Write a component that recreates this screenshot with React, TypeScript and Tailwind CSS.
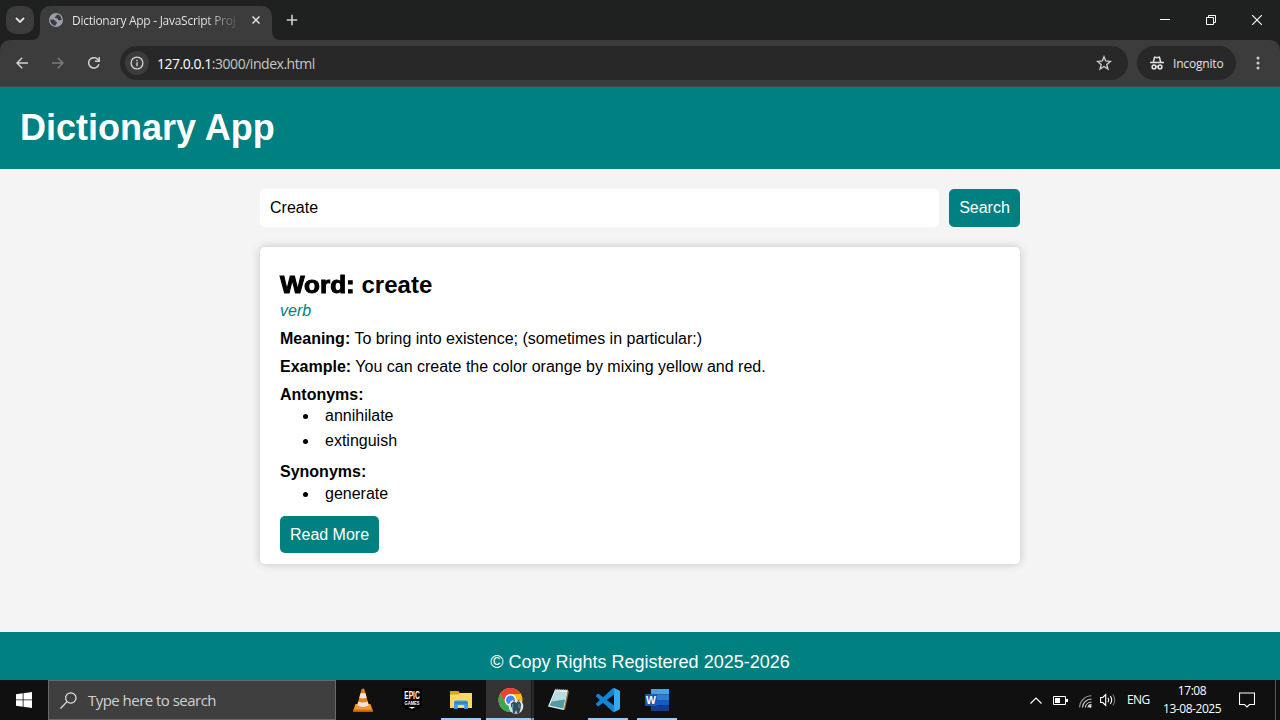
import type { ReactNode } from "react";

function ChevronDown() {
  return (
    <svg width="10" height="8" viewBox="0 0 10 8" fill="none" stroke="#e3e3e3" strokeWidth="1.8">
      <path d="M1 2l4 4 4-4" />
    </svg>
  );
}

function Globe() {
  return (
    <svg width="16" height="16" viewBox="0 0 16 16" className="shrink-0">
      <circle cx="8" cy="8" r="7" fill="#9aa0ab" />
      <path
        d="M2.300 7.500C3.800 7.500 5.500 7.400 6.800 8.200c1 .6.700 1.600 1.800 1.700.6.100.4 1 .1 1.500-.4.700-1.300.9-1.300 2.300C4.300 13.500 2.200 10.800 2.300 7.500zM9.500 2.500c-.2.900-1.700.8-1.700 1.800-.1.900-1.300.5-1.200 1.300.1.900 1.700.6 2.600 1 .9.300.6 1.500 1.700 1.700.9.100 1.800-.4 2.800-.3C13.400 4.800 11.900 3 9.500 2.500z"
        fill="#3c3c3c"
      />
    </svg>
  );
}

function TabStrip() {
  return (
    <div className="flex h-10 shrink-0 bg-[#1f2120]">
      <div className="ml-1.5 mt-1.5 flex h-7 w-7 items-center justify-center rounded-[10px] bg-[#3c3c3c]">
        <ChevronDown />
      </div>
      <svg width="8" height="8" className="-ml-0.5 self-end" viewBox="0 0 8 8">
        <path d="M8 0v8H0a8 8 0 0 0 8-8z" fill="#3c3c3c" />
      </svg>
      <div className="mt-1.5 flex w-[232px] items-center rounded-t-[10px] bg-[#3c3c3c] pb-1.5 pl-2">
        <Globe />
        <div className="ml-2 w-[167px] whitespace-nowrap bg-gradient-to-r from-[#ececec] from-80% to-[#4a4a4a] bg-clip-text pt-0.5 text-[12px] leading-4 tracking-[-0.28px] text-transparent">
          Dictionary App - JavaScript Proj
        </div>
        <svg width="8" height="8" viewBox="0 0 8 8" className="ml-[13px]" stroke="#e3e3e3" strokeWidth="1.5">
          <path d="M.5.5l7 7M7.500.5l-7 7" />
        </svg>
      </div>
      <svg width="8" height="8" className="self-end" viewBox="0 0 8 8">
        <path d="M0 0v8h8a8 8 0 0 1-8-8z" fill="#3c3c3c" />
      </svg>
      <svg width="12" height="12" viewBox="0 0 12 12" className="ml-1.5 mt-3.5" stroke="#d0d0d0" strokeWidth="1.6">
        <path d="M6 .8v10.400M.8 6h10.400" />
      </svg>
      <div className="ml-auto flex text-white">
        <div className="flex w-[46px] items-center justify-center">
          <svg width="10" height="10" viewBox="0 0 10 10">
            <path d="M0 4h10v1H0z" fill="#fff" />
          </svg>
        </div>
        <div className="flex w-[46px] items-center justify-center">
          <svg width="10" height="10" viewBox="0 0 10 10" fill="none" stroke="#fff">
            <path d="M.5 2.500h7v7h-7zM2.500 2.500v-2h7v7h-2" />
          </svg>
        </div>
        <div className="flex w-[46px] items-center justify-center">
          <svg width="10" height="10" viewBox="0 0 10 10" stroke="#fff" strokeWidth="1.100">
            <path d="M0 0l10 10M10 0L0 10" />
          </svg>
        </div>
      </div>
    </div>
  );
}

function AddressBar() {
  return (
    <div className="bg-[#1f2120]">
      <div className="flex h-[47px] items-center rounded-t-[10px] border-b border-[#474747] bg-[#3c3c3c]">
        <svg width="12" height="12" viewBox="0 0 12 12" className="ml-4" fill="none" stroke="#d0d0d0" strokeWidth="1.5">
          <path d="M12 6H1.200M6.200.8L1 6l5.200 5.200" />
        </svg>
        <svg width="12" height="12" viewBox="0 0 12 12" className="ml-6" fill="none" stroke="#7b7b7b" strokeWidth="1.5">
          <path d="M0 6h10.800M5.800.8L11 6l-5.200 5.200" />
        </svg>
        <svg width="12" height="12" viewBox="0 0 12 12" className="ml-6" fill="none" stroke="#d0d0d0" strokeWidth="1.5">
          <path d="M10.900 7.200A5.200 5.200 0 1 1 9.800 2.400L11 3.700" />
          <path d="M11.200 0v4.300H6.900" />
        </svg>
        <div className="ml-5 flex h-[34px] w-[1008px] items-center rounded-full bg-[#282828] px-[5px]">
          <div className="flex h-6 w-6 items-center justify-center rounded-full bg-[#3c3c3c]">
            <svg width="14" height="14" viewBox="0 0 14 14" fill="none" stroke="#d6d6d6" strokeWidth="1.300">
              <circle cx="7" cy="7" r="5.900" />
              <path d="M7 6.200v4M7 3.700v1.500" />
            </svg>
          </div>
          <div className="ml-2 mt-px text-[14px] leading-5 tracking-[-0.47px] text-[#c7c7c7]">
            <span className="text-white">127.0.0.1</span>:3000/index.html
          </div>
          <svg width="16" height="16" viewBox="0 0 16 16" className="ml-auto mr-[11px]" fill="none" stroke="#d0d0d0" strokeWidth="1.300">
            <path d="M8 1.700l1.700 4.300 4.700.4-3.600 3 1.200 4.600L8 11.500 4 14l1.200-4.600-3.600-3 4.700-.4z" />
          </svg>
        </div>
        <div className="ml-[9px] flex h-[34px] w-[99px] items-center rounded-full bg-[#282828] pl-[13px] text-[12px] leading-4 tracking-[-0.18px] text-[#e3e3e3]">
          <svg width="14" height="14" viewBox="0 0 14 14" fill="none" stroke="#e3e3e3" strokeWidth="1.500">
            <path d="M0 6.500h14" />
            <path d="M3.300 6.300l1.300-5.200 2.400.6 2.400-.6 1.300 5.200" />
            <circle cx="4" cy="10.900" r="1.900" />
            <circle cx="10" cy="10.900" r="1.900" />
            <path d="M5.900 10.700q1.100-.6 2.200 0" />
          </svg>
          <span className="ml-[9px] mt-px">Incognito</span>
        </div>
        <svg width="4" height="14" viewBox="0 0 4 14" className="ml-5" fill="#d0d0d0">
          <circle cx="2" cy="2" r="1.500" />
          <circle cx="2" cy="7" r="1.500" />
          <circle cx="2" cy="12" r="1.500" />
        </svg>
      </div>
    </div>
  );
}

function WordList({ title, words }: { title: string; words: string[] }) {
  return (
    <>
      <b className="block leading-[18px]">{title}</b>
      <ul>
        {words.map((w) => (
          <li key={w} className="flex h-[25px] items-center">
            <span className="ml-[23px] mr-[17px] mt-0.5 h-[5px] w-[5px] rounded-full bg-black" />
            <span className="leading-[18px]">{w}</span>
          </li>
        ))}
      </ul>
    </>
  );
}

function DictionaryPage() {
  return (
    <div className="flex h-[593px] flex-col bg-[#f4f4f4] font-['Liberation_Sans',Arial,sans-serif] text-[16px] text-black">
      <header className="flex h-[82px] shrink-0 items-center bg-[#008080] pl-5">
        <h1 className="text-[36px] font-bold leading-[42px] text-white">Dictionary App</h1>
      </header>
      <main className="mx-auto w-[760px] grow pt-5">
        <div className="flex h-[38px] gap-2.5">
          <div className="flex grow items-center rounded-[5px] bg-white px-2.5">Create</div>
          <button className="w-[71px] rounded-[5px] bg-[#008080] text-white">Search</button>
        </div>
        <section className="mt-5 h-[317px] rounded-[5px] bg-white px-5 pt-6 shadow-[0_0_10px_rgba(0,0,0,0.2)]">
          <h2 className="flex text-[24px] font-bold leading-7">
            <span className="w-[81.500px]">
              <span className="inline-block origin-left scale-x-[1.085] [-webkit-text-stroke:1px_black]">Word:</span>
            </span>
            <span>create</span>
          </h2>
          <p className="mt-[3px] italic leading-[18px] text-[#008080]">verb</p>
          <p className="mt-2.5 leading-[18px]">
            <b>Meaning:</b> To bring into existence; (sometimes in particular:)
          </p>
          <p className="mb-2.5 mt-2.5 leading-[18px]">
            <b>Example:</b> You can create the color orange by mixing yellow and red.
          </p>
          <div className="[&>ul]:-mt-px">
            <WordList title="Antonyms:" words={["annihilate", "extinguish"]} />
          </div>
          <div className="mt-2.5">
            <WordList title="Synonyms:" words={["generate"]} />
          </div>
          <button className="mt-2.5 block h-[37px] w-[99px] rounded-[5px] bg-[#008080] text-white">Read More</button>
        </section>
      </main>
      <footer className="h-12 shrink-0 bg-[#008080] pt-5 text-center text-[18px] leading-5 text-white">
        © Copy Rights Registered 2025-2026
      </footer>
    </div>
  );
}

function Vlc() {
  return (
    <svg width="22" height="24" viewBox="0 0 22 24">
      <path d="M3.500 16h15l2.500 7.500H1z" fill="#fb9a1c" />
      <path d="M1.400 21.500h19.200l.4 2H1z" fill="#d96a00" />
      <path d="M9.700 1q1.300-.8 2.600 0L17 18q-6 3-12 0z" fill="#f07d0c" />
      <path d="M8.500 5.300h5l1.200 4.500q-3.700 1.500-7.400 0zM6.300 13.400q4.700 2 9.400 0l1.100 4q-5.800 3-11.600 0z" fill="#e6e6e6" />
    </svg>
  );
}

function Epic() {
  return (
    <svg width="20" height="23" viewBox="0 0 20 23" className="-mt-0.5" overflow="visible">
      <path d="M1.500 0h17Q20 0 20 1.500V18q0 1-1 1.500L10 23l-9-3.500q-1-.5-1-1.500V1.500Q0 0 1.500 0z" fill="#000" />
      <text x="2.200" y="11" fill="#fff" fontFamily="Liberation Sans" fontWeight="700" fontSize="11.500" textLength="15.600" lengthAdjust="spacingAndGlyphs">EPIC</text>
      <text x="2.500" y="16.500" fill="#fff" fontFamily="Liberation Sans" fontWeight="700" fontSize="5" textLength="15" lengthAdjust="spacingAndGlyphs">GAMES</text>
      <path d="M6.500 19h7L10 20.800z" fill="#fff" />
    </svg>
  );
}

function Folder() {
  return (
    <svg width="22" height="20" viewBox="0 0 22 20">
      <path d="M0 1h8.500l1.500 2.500h12V18H0z" fill="#e3a01b" />
      <path d="M0 4.500h8.500L10 3h12v15H0z" fill="#ffd767" />
      <path d="M4 19V12q0-1.500 1.500-1.500h11Q18 10.500 18 12v7h-3.800v-4H7.800v4z" fill="#3e9ae3" />
      <path d="M5 12h12v1.500H5z" fill="#2580cc" />
    </svg>
  );
}

function Chrome() {
  return (
    <svg width="26" height="26" viewBox="0 0 26 26">
      <circle cx="12.500" cy="12" r="12" fill="#fbc116" />
      <path d="M2.100 6A12 12 0 0 1 22.900 6H12.500L7.300 15z" fill="#ea4335" />
      <path d="M2.100 6A12 12 0 0 0 12.500 24l5.200-9H7.300z" fill="#34a853" />
      <circle cx="12.500" cy="12" r="5.900" fill="#fff" />
      <circle cx="12.500" cy="12" r="4.500" fill="#4285f4" />
      <circle cx="18" cy="18.500" r="7.300" fill="#dce3e4" />
      <path d="M13 15.500l2-1.500h2l1.500 1 1-1.500h2l1.500 2.500-.5 5-1.500 4.300-2-.4-1-3-1 3h-2l-.5-4-1.500-2.500z" fill="#2c515e" />
      <path d="M15.300 11.700h1.700v2h-1.700zM19.800 11.500h1.700v2h-1.700z" fill="#8b7468" />
      <path d="M14 16h1.300v4.500H14zM20.500 16h1v4h-1z" fill="#5b94a5" />
    </svg>
  );
}

function Notepad() {
  return (
    <svg width="24" height="24" viewBox="0 0 24 24">
      <path d="M20 2.500l2 .5-4 19-3-1z" fill="#9a6b3b" />
      <path d="M8 1.500l12.700.5-4 20L1 18.500z" fill="#eef7f6" />
      <path d="M8.500 3.500l11 .7-3.300 16.300-13.700-3z" fill="#8ec4ca" />
      <path d="M8.500 3.500l11 .7-1.500 7.300L5 14z" fill="#b7dde0" />
      <path d="M5 13.500l13-2-1.800 9-13.700-3z" fill="#559aa2" />
      <path d="M8 1.500l12.700.5" stroke="#999" strokeWidth="1.500" strokeDasharray="1 1" />
    </svg>
  );
}

function VsCode() {
  return (
    <svg width="24" height="24" viewBox="0 0 24 24">
      <path
        d="M23.150 2.587L18.210.21a1.494 1.494 0 0 0-1.705.29l-9.460 8.630-4.120-3.128a.999.999 0 0 0-1.276.057L.327 7.261A1 1 0 0 0 .326 8.740L3.899 12 .326 15.260a1 1 0 0 0 .001 1.479L1.650 17.940a.999.999 0 0 0 1.276.057l4.120-3.128 9.460 8.630a1.492 1.492 0 0 0 1.704.290l4.942-2.377A1.500 1.500 0 0 0 24 20.060V3.939a1.500 1.500 0 0 0-.850-1.352zm-5.146 14.861L10.826 12l7.178-5.448v10.896z"
        fill="#1485d2"
      />
      <path d="M18 .1l5.150 2.487A1.500 1.500 0 0 1 24 3.939V20.060a1.500 1.500 0 0 1-.850 1.352L18 23.900z" fill="#33aaf3" />
    </svg>
  );
}

function Word() {
  return (
    <svg width="24" height="22" viewBox="0 0 24 22">
      <path d="M6 0h18v5.500H6z" fill="#41a5ee" />
      <path d="M6 5.500h18V11H6z" fill="#2b7cd3" />
      <path d="M6 11h18v5.500H6z" fill="#185abd" />
      <path d="M6 16.500h18V22H6z" fill="#103f91" />
      <rect y="5" width="12" height="12" rx="1" fill="#1b57b3" />
      <text x="1" y="14.600" fill="#fff" fontFamily="Liberation Sans" fontWeight="700" fontSize="10.500">W</text>
    </svg>
  );
}

function TaskItem({ children, open, active }: { children: ReactNode; open?: boolean; active?: boolean }) {
  return (
    <div className="flex w-[49px] justify-center">
      {active ? (
        <div className="flex w-12">
          <div className="flex w-[45px] justify-center border-b-2 border-[#9bcbf7] bg-[#333333] pl-1.5 pt-2">
            {children}
          </div>
          <div className="w-[3px] border-b-2 border-l border-b-[#7ba4c9] border-l-[#1b1b1b] bg-[#282828]" />
        </div>
      ) : (
        <div className={open ? "flex w-10 items-center justify-center border-b-2 border-[#9bcbf7] pt-0.5" : "flex w-10 items-center justify-center"}>
          {children}
        </div>
      )}
    </div>
  );
}

function Taskbar() {
  return (
    <div className="flex h-10 shrink-0 bg-[#101010] text-white">
      <div className="flex w-12 items-center justify-center">
        <svg width="16" height="16" viewBox="0 0 16 16" fill="#fff">
          <path d="M0 2.300L6.700 1.300v6.200H0zM7.500 1.200L16 0v7.500H7.500zM0 8.300h6.700v6.400L0 13.700zM7.500 8.300H16V16l-8.500-1.200z" />
        </svg>
      </div>
      <div className="flex w-[288px] items-center border border-[#696969] bg-[#3f3f3f] pl-[11px]">
        <svg width="17" height="17" viewBox="0 0 17 17" fill="none" stroke="#e6e6e6" strokeWidth="1.200">
          <circle cx="10.800" cy="6" r="5.200" />
          <path d="M7.100 9.700L.5 16.500" />
        </svg>
        <span className="ml-[11px] text-[15px] leading-5 tracking-[-0.53px] text-[#d2d2d2]">Type here to search</span>
      </div>
      <div className="ml-0.5 flex">
        <TaskItem><Vlc /></TaskItem>
        <TaskItem><Epic /></TaskItem>
        <TaskItem open><Folder /></TaskItem>
        <TaskItem open active><Chrome /></TaskItem>
        <TaskItem><Notepad /></TaskItem>
        <TaskItem open><VsCode /></TaskItem>
        <TaskItem open><Word /></TaskItem>
      </div>
      <div className="ml-auto flex items-center">
        <svg width="12" height="7" viewBox="0 0 12 7" fill="none" stroke="#fff" strokeWidth="1.200">
          <path d="M.5 6.500L6 1l5.500 5.500" />
        </svg>
        <svg width="15" height="9" viewBox="0 0 15 9" className="ml-[11px]" fill="none" stroke="#fff">
          <path d="M.5.5h12v8H.5z" />
          <path d="M2 2h5v5H2zM13 3h2v3h-2z" fill="#fff" stroke="none" />
        </svg>
        <svg width="13" height="13" viewBox="0 0 13 13" className="ml-[11px] mt-0.5" fill="none" stroke="#ddd" strokeWidth="1.100">
          <path d="M.6 12.500A12 12 0 0 1 12.500.8" stroke="#999" />
          <path d="M3.500 12.500a9 9 0 0 1 9-8.500M6.300 12.500a6.300 6.300 0 0 1 6.200-5.500" />
          <path d="M8.900 12.500a3.600 3.600 0 0 1 3.600-2.900" />
          <circle cx="11.300" cy="11.500" r="1.200" fill="#fff" stroke="none" />
        </svg>
        <svg width="17" height="14" viewBox="0 0 17 14" className="ml-2" fill="none" stroke="#fff" strokeWidth="1.100">
          <path d="M.6 4.500h2.200L5.700 1.500v11L2.800 9.500H.6z" />
          <path d="M8 4.700q1.600 2.300 0 4.600M10.300 3.200q2.800 3.800 0 7.600" />
          <path d="M12.800 1.500q4 5.500 0 11" stroke="#777" />
        </svg>
        <span className="ml-[10px] w-[23px] whitespace-nowrap text-[12px] leading-4 tracking-[-0.6px]">ENG</span>
        <div className="ml-[13px] w-[58px] whitespace-nowrap text-center text-[12px] leading-[18px] tracking-[-0.45px]">
          <div>17:08</div>
          <div>13-08-2025</div>
        </div>
        <svg width="16" height="16" viewBox="0 0 16 16" className="ml-[18px] mr-5" fill="none" stroke="#fff" strokeWidth="1.100">
          <path d="M.5 1h15v11.500h-5L8 15l-2.500-2.500h-5z" />
        </svg>
        <div className="mr-1 h-10 w-px bg-[#5a5a5a]" />
      </div>
    </div>
  );
}

export default function App() {
  return (
    <div className="flex h-[720px] w-[1280px] flex-col overflow-hidden font-['Open_Sans','Noto_Sans',sans-serif]">
      <TabStrip />
      <AddressBar />
      <DictionaryPage />
      <Taskbar />
    </div>
  );
}
